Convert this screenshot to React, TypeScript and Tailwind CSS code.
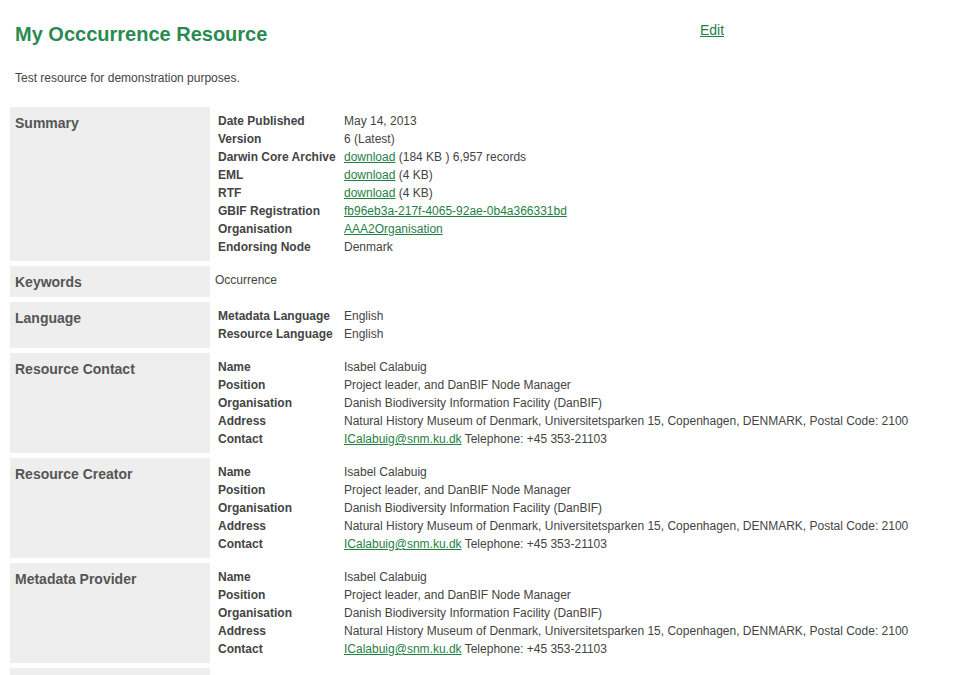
import React from "react";

type Field = { k: string; v: React.ReactNode };

const link = "text-[#1f7f45] underline";

function A({ children }: { children: React.ReactNode }) {
  return <a href="#" className={link}>{children}</a>;
}

function contact(): Field[] {
  return [
    { k: "Name", v: "Isabel Calabuig" },
    { k: "Position", v: "Project leader, and DanBIF Node Manager" },
    { k: "Organisation", v: "Danish Biodiversity Information Facility (DanBIF)" },
    { k: "Address", v: "Natural History Museum of Denmark, Universitetsparken 15, Copenhagen, DENMARK, Postal Code: 2100" },
    { k: "Contact", v: <><A>ICalabuig@snm.ku.dk</A> Telephone: +45 353-21103</> },
  ];
}

const sections: { title: string; fields?: Field[]; text?: string }[] = [
  {
    title: "Summary",
    fields: [
      { k: "Date Published", v: "May 14, 2013" },
      { k: "Version", v: "6 (Latest)" },
      { k: "Darwin Core Archive", v: <><A>download</A> (184 KB ) 6,957 records</> },
      { k: "EML", v: <><A>download</A> (4 KB)</> },
      { k: "RTF", v: <><A>download</A> (4 KB)</> },
      { k: "GBIF Registration", v: <A>fb96eb3a-217f-4065-92ae-0b4a366331bd</A> },
      { k: "Organisation", v: <A>AAA2Organisation</A> },
      { k: "Endorsing Node", v: "Denmark" },
    ],
  },
  { title: "Keywords", text: "Occurrence" },
  {
    title: "Language",
    fields: [
      { k: "Metadata Language", v: "English" },
      { k: "Resource Language", v: "English" },
    ],
  },
  { title: "Resource Contact", fields: contact() },
  { title: "Resource Creator", fields: contact() },
  { title: "Metadata Provider", fields: contact() },
  // next section starts just below the fold
  { title: "", text: "" },
];

export default function App() {
  return (
    <div className="min-h-screen bg-white px-[10px] text-[#444] font-['Liberation_Sans',Arial,sans-serif]">
      <div className="flex items-start">
        <h1 className="w-[690px] pl-[5px] pt-[22px] text-[20px] leading-[24px] font-bold text-[#2a8a52]">
          My Occcurrence Resource
        </h1>
        <a href="#" className="pt-[21px] text-[14px] leading-[18px] text-[#1f7f45] underline">Edit</a>
      </div>

      <p className="mt-[23px] pl-[5px] text-[12px] leading-[18px]">
        Test resource for demonstration purposes.
      </p>

      <div className="mt-[20px] flex flex-col gap-[5px]">
        {sections.map((s, i) => (
          <div key={i} className="flex">
            <div className="w-[200px] shrink-0 bg-[#eeeeee] pl-[5px] pt-[7px] pb-[6px] min-h-[31px] text-[14px] leading-[18px] font-bold text-[#555]">
              {s.title}
            </div>
            {s.fields ? (
              <div className="pl-[8px] pt-[5px] pb-[5px] text-[12px] leading-[18px]">
                {s.fields.map((f) => (
                  <div key={f.k} className="flex">
                    <div className="w-[126px] shrink-0 font-bold">{f.k}</div>
                    <div className="whitespace-nowrap">{f.v}</div>
                  </div>
                ))}
              </div>
            ) : (
              <div className="pl-[5px] pt-[5px] text-[12px] leading-[18px]">{s.text}</div>
            )}
          </div>
        ))}
      </div>
    </div>
  );
}
